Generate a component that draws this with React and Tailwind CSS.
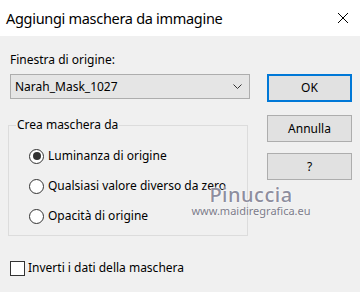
export default function App() {
  return (
    <div className="relative w-[360px] h-[292px] flex flex-col overflow-hidden font-['Noto_Sans',sans-serif] text-[12px] text-black">
      {/* barra del titolo */}
      <div className="h-[36px] bg-white flex items-center justify-between pl-[6px] pr-[11px]">
        <span className="text-[14.5px] leading-none tracking-[-0.3px]">Aggiungi maschera da immagine</span>
        <svg width="12" height="12" viewBox="0 0 12 12" className="text-black">
          <path d="M1 1 L11 11 M11 1 L1 11" stroke="currentColor" strokeWidth="1" />
        </svg>
      </div>

      {/* corpo */}
      <div className="flex-1 bg-[#f0f0f0] flex px-[8px]">
        <div className="w-[241px] pt-[16px]">
          <p className="pl-[2px] leading-[16px]">Finestra di origine:</p>
          <div className="ml-[2px] mt-[6px] h-[25px] w-[240px] bg-[#e5e5e5] border border-[#adadad] flex items-center justify-between pl-[4px] pr-[7px]">
            <span>Narah_Mask_1027</span>
            <svg width="9" height="6" viewBox="0 0 9 6">
              <path d="M0.5 0.5 L4.5 4.5 L8.5 0.5" stroke="#333" strokeWidth="1" fill="none" />
            </svg>
          </div>

          <fieldset className="mt-[18px] w-[240px] border border-[#dcdcdc] px-[7px] pb-[4px]">
            <legend className="px-[1px] leading-[16px]">Crea maschera da</legend>
            <div className="pt-[8px] pl-[13px] flex flex-col">
              {[
                { label: "Luminanza di origine", on: true },
                { label: "Qualsiasi valore diverso da zero", on: false },
                { label: "Opacità di origine", on: false },
              ].map((r) => (
                <div key={r.label} className="h-[30px] flex items-center gap-[4px]">
                  <span className="w-[15px] h-[15px] rounded-full border border-[#333] bg-white flex items-center justify-center shrink-0">
                    {r.on && <span className="w-[8px] h-[8px] rounded-full bg-[#333]" />}
                  </span>
                  <span className="whitespace-nowrap">{r.label}</span>
                </div>
              ))}
            </div>
          </fieldset>

          <div className="mt-[24px] ml-[2px] h-[16px] flex items-center gap-[3px]">
            <span className="w-[15px] h-[15px] border border-[#333] bg-white shrink-0" />
            <span>Inverti i dati della maschera</span>
          </div>
        </div>

        <div className="ml-[18px] w-[85px] pt-[38px] flex flex-col">
          <button className="h-[28px] bg-[#e1e1e1] border-2 border-[#0078d7]">OK</button>
          <button className="mt-[13px] h-[27px] bg-[#e1e1e1] border border-[#adadad]">Annulla</button>
          <button className="mt-[11px] h-[27px] bg-[#e1e1e1] border border-[#adadad]">?</button>
        </div>
      </div>

      {/* filigrana */}
      <div className="absolute left-[191px] top-[184px] w-[120px] flex flex-col items-center pointer-events-none">
        <span className="text-[20px] leading-[21px] font-medium text-[#8e8e9e] tracking-[0.5px] [text-shadow:0_0_2px_#fff,0_0_2px_#fff]">Pinuccia</span>
        <span className="text-[11px] leading-[12px] text-[#7c7c8a] [text-shadow:0_0_2px_#fff]">www.maidiregrafica.eu</span>
      </div>
    </div>
  );
}
